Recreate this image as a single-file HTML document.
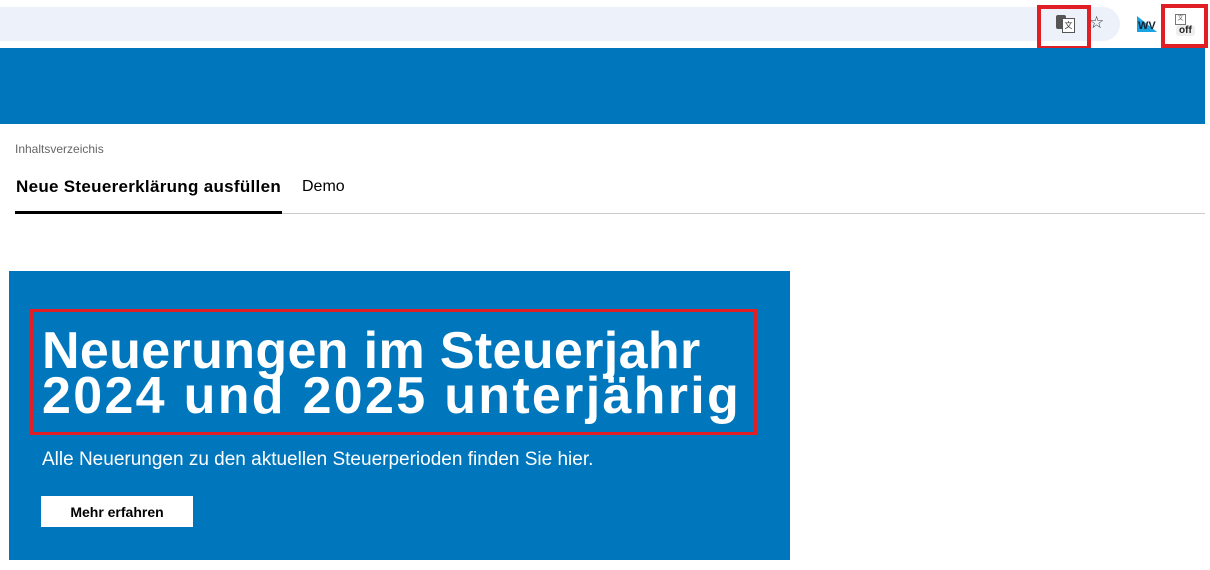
<!DOCTYPE html>
<html><head><meta charset="utf-8"><style>
body{margin:0;width:1210px;height:570px;background:#fff;font-family:"Liberation Sans",sans-serif;position:relative;overflow:hidden}
.abs{position:absolute}
</style></head><body>
<div class="abs" style="left:0;top:7px;width:1120px;height:34px;background:#edf1f9;border-radius:0 17px 17px 0"></div>
<div class="abs" style="left:1037px;top:5px;width:54px;height:45px;border:4px solid #e01e26;box-sizing:border-box"></div>
<div class="abs" style="left:1056px;top:15px;width:10px;height:14px;background:#555;border-radius:2px"></div>
<div class="abs" style="left:1062px;top:18px;width:11px;height:13px;border:1px solid #555;background:#fff;font-size:8px;line-height:13px;text-align:center;color:#333">文</div>
<div class="abs" style="left:1089px;top:13px;font-size:17px;color:#333">☆</div>
<svg class="abs" style="left:1137px;top:16px" width="20" height="16"><polygon points="0,0 20,16 0,16" fill="#1aa3e0"/><text x="1" y="13" font-size="11" font-family="Liberation Sans" font-weight="bold" fill="#123">WV</text></svg>
<div class="abs" style="left:1161px;top:4px;width:47px;height:44px;border:4px solid #e01e26;box-sizing:border-box"></div>
<div class="abs" style="left:1175px;top:14px;width:9px;height:9px;border:1px solid #777;font-size:6px;line-height:9px;text-align:center;color:#555">文</div>
<div class="abs" style="left:1176px;top:25px;padding:0 3px;background:#eee;border-radius:3px;font-size:10px;font-weight:bold;color:#222">off</div>
<div class="abs" style="left:0;top:48px;width:1205px;height:76px;background:#0077bd"></div>
<div class="abs" style="left:15px;top:142px;font-size:12px;color:#666">Inhaltsverzeichis</div>
<div class="abs" style="left:16px;top:177px;font-size:17px;font-weight:bold;color:#000;letter-spacing:0.3px">Neue Steuererklärung ausfüllen</div>
<div class="abs" style="left:302px;top:178px;font-size:16px;color:#000">Demo</div>
<div class="abs" style="left:15px;top:213px;width:1190px;height:1px;background:#ccc"></div>
<div class="abs" style="left:15px;top:211px;width:267px;height:3px;background:#000"></div>
<div class="abs" style="left:9px;top:271px;width:781px;height:289px;background:#0077bd"></div>
<div class="abs" style="left:30px;top:309px;width:727px;height:126px;border:3px solid #e01e26;box-sizing:border-box"></div>
<div class="abs" style="left:42px;top:329px;font-size:52px;line-height:45px;font-weight:bold;color:#fff;white-space:nowrap"><div style="letter-spacing:0.35px">Neuerungen im Steuerjahr</div><div style="letter-spacing:2.3px">2024 und 2025 unterjährig</div></div>
<div class="abs" style="left:42px;top:449px;font-size:19px;color:#fff">Alle Neuerungen zu den aktuellen Steuerperioden finden Sie hier.</div>
<div class="abs" style="left:41px;top:496px;width:152px;height:31px;background:#fff;font-size:14px;font-weight:bold;line-height:33px;text-align:center;color:#000">Mehr erfahren</div>
</body></html>
